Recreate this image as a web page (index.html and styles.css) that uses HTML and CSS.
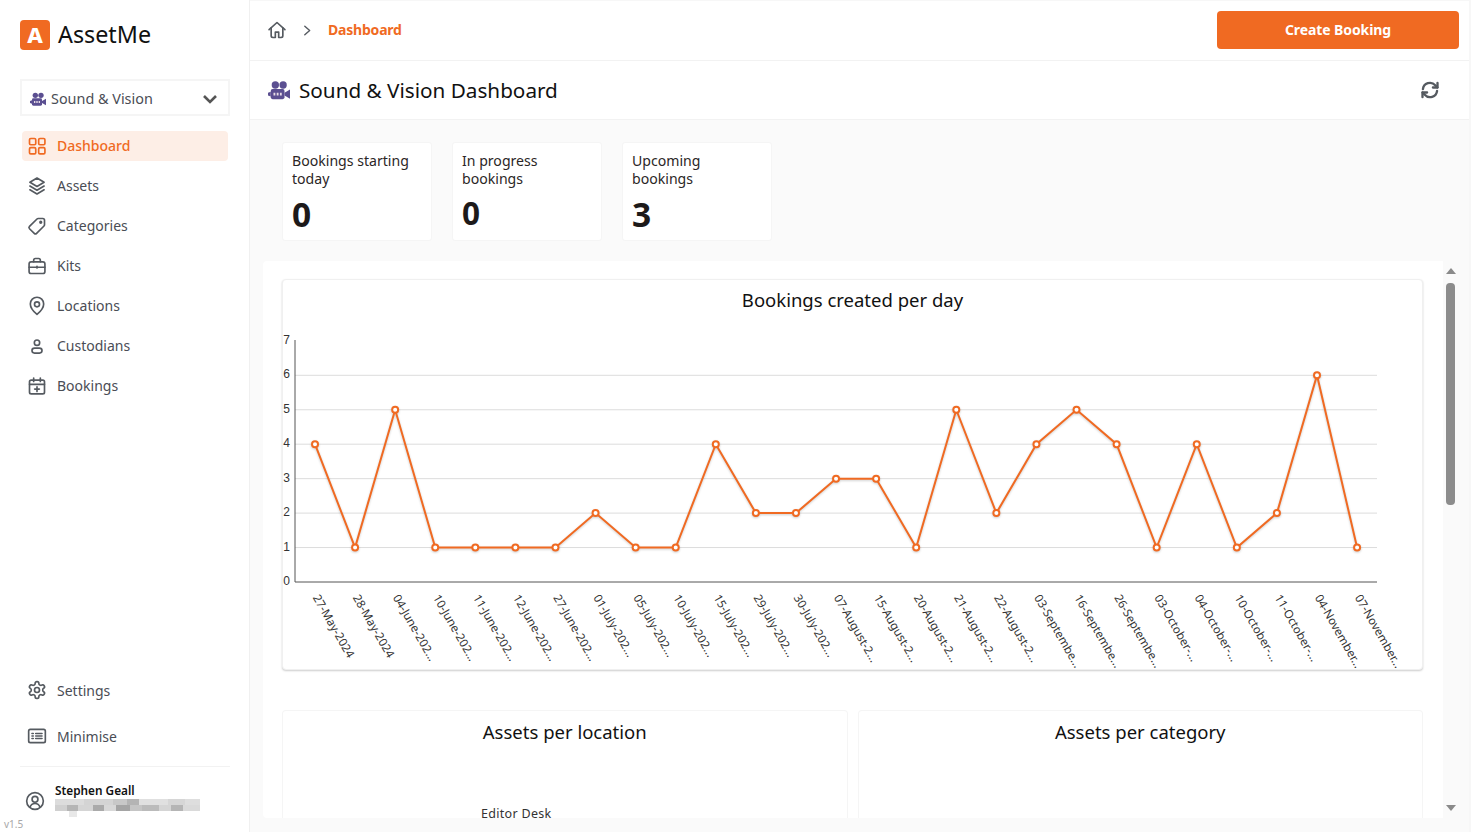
FILE: index.html
```html
<!DOCTYPE html>
<html lang="en">
<head>
    <meta charset="UTF-8">
    <meta name="viewport" content="width=device-width, initial-scale=1.0">
    <title>AssetMe - Dashboard</title>
    <link rel="stylesheet" href="styles.css">
</head>
<body>
    <aside class="sidebar">
        <div class="brand">
            <span class="brand-mark">A</span>
            <span class="brand-name">AssetMe</span>
        </div>

        <div class="team-select">
            <svg class="team-icon" viewBox="0 0 24 24"><circle cx="8" cy="6.5" r="4"/><circle cx="16.5" cy="6.5" r="4"/><rect x="3" y="11" width="15" height="11" rx="2"/><path d="M18 15l6-3.5v10L18 18zM0 15l3-1v5l-3-1z"/><rect class="team-dot" x="6" y="15" width="2" height="3"/><rect class="team-dot" x="9.5" y="15" width="2" height="3"/><rect class="team-dot" x="13" y="15" width="2" height="3"/></svg>
            <span class="team-name">Sound &amp; Vision</span>
            <svg class="team-chevron" viewBox="0 0 24 24"><path d="M4 8l8 8 8-8"/></svg>
        </div>

        <nav class="nav">
            <a class="nav-item active">
                <svg class="icon" viewBox="0 0 24 24"><rect x="3" y="3" width="7.5" height="7.5" rx="1.5"/><rect x="14" y="3" width="7.5" height="7.5" rx="1.5"/><rect x="3" y="14" width="7.5" height="7.5" rx="1.5"/><rect x="14" y="14" width="7.5" height="7.5" rx="1.5"/></svg>
                Dashboard
            </a>
            <a class="nav-item">
                <svg class="icon" viewBox="0 0 24 24"><path d="M12 2.5 3.5 7.5l8.5 5 8.5-5z"/><path d="M3.5 12l8.500 5 8.500-5"/><path d="M3.5 16.500l8.500 5 8.500-5"/></svg>
                Assets
            </a>
            <a class="nav-item">
                <svg class="icon" viewBox="0 0 24 24"><path d="M3 12.5 12 3.6a2 2 0 0 1 1.4-.6H19a2 2 0 0 1 2 2v5.6a2 2 0 0 1-.6 1.4l-8.900 8.900a2 2 0 0 1-2.800 0L3 15.300a2 2 0 0 1 0-2.800Z"/><circle cx="16.500" cy="7.500" r="1"/></svg>
                Categories
            </a>
            <a class="nav-item">
                <svg class="icon" viewBox="0 0 24 24"><rect x="2.500" y="7" width="19" height="14" rx="2.500"/><path d="M8 7V5a2 2 0 0 1 2-2h4a2 2 0 0 1 2 2v2"/><path d="M2.500 13.500h19"/><path d="M12 12.500v2"/></svg>
                Kits
            </a>
            <a class="nav-item">
                <svg class="icon" viewBox="0 0 24 24"><path d="M12 22s8-6.500 8-12.500a8 8 0 0 0-16 0C4 15.500 12 22 12 22Z"/><circle cx="12" cy="10" r="3"/></svg>
                Locations
            </a>
            <a class="nav-item">
                <svg class="icon" viewBox="0 0 24 24"><circle cx="12" cy="8" r="3.200"/><rect x="6" y="14.500" width="12" height="6" rx="3"/></svg>
                Custodians
            </a>
            <a class="nav-item">
                <svg class="icon" viewBox="0 0 24 24"><rect x="3" y="5" width="18" height="16.500" rx="2"/><path d="M3 10h18"/><path d="M8 2.500V6.500"/><path d="M16 2.500V6.500"/><path d="M12 13v5.500"/><path d="M9.200 15.700h5.600"/></svg>
                Bookings
            </a>
        </nav>

        <div class="side-bottom">
            <a class="nav-item">
                <svg class="icon" viewBox="0 0 24 24"><path d="M12.220 2h-.44a2 2 0 0 0-2 2v.18a2 2 0 0 1-1 1.730l-.43.25a2 2 0 0 1-2 0l-.15-.08a2 2 0 0 0-2.730.73l-.22.38a2 2 0 0 0 .73 2.730l.15.1a2 2 0 0 1 1 1.720v.51a2 2 0 0 1-1 1.740l-.15.09a2 2 0 0 0-.73 2.730l.22.38a2 2 0 0 0 2.730.73l.15-.08a2 2 0 0 1 2 0l.43.25a2 2 0 0 1 1 1.730V20a2 2 0 0 0 2 2h.44a2 2 0 0 0 2-2v-.18a2 2 0 0 1 1-1.730l.43-.25a2 2 0 0 1 2 0l.15.08a2 2 0 0 0 2.730-.73l.22-.39a2 2 0 0 0-.73-2.730l-.15-.08a2 2 0 0 1-1-1.740v-.5a2 2 0 0 1 1-1.740l.15-.09a2 2 0 0 0 .73-2.730l-.22-.38a2 2 0 0 0-2.730-.73l-.15.08a2 2 0 0 1-2 0l-.43-.25a2 2 0 0 1-1-1.730V4a2 2 0 0 0-2-2z"/><circle cx="12" cy="12" r="3"/></svg>
                Settings
            </a>
            <a class="nav-item minimise">
                <svg class="icon" viewBox="0 0 24 24"><rect x="2" y="4" width="20" height="16" rx="2"/><path d="M6 9h1.500M10.500 9H18M6 12h1.500M10.500 12H18M6 15h1.500M10.500 15H18"/></svg>
                Minimise
            </a>
            <div class="user">
                <svg class="icon user-icon" viewBox="0 0 24 24"><circle cx="12" cy="12" r="10"/><circle cx="12" cy="10" r="3.500"/><path d="M6 19.500c1-3 3.500-4.500 6-4.500s5 1.500 6 4.500"/></svg>
                <div class="user-info">
                    <div class="user-name">Stephen Geall</div>
                    <div class="user-email"></div>
                </div>
            </div>
        </div>
        <span class="version">v1.5</span>
    </aside>

    <main class="main">
        <header class="topbar">
            <svg class="icon crumb-home" viewBox="0 0 24 24"><path d="M2.500 11.500 12 3l9.500 8.500"/><path d="M5 9.500V19a2 2 0 0 0 2 2h3v-6.500h4V21h3a2 2 0 0 0 2-2V9.500"/></svg>
            <svg class="icon crumb-sep" viewBox="0 0 24 24"><path d="M7 4l9 8-9 8"/></svg>
            <span class="crumb-current">Dashboard</span>
            <button class="create-btn">Create Booking</button>
        </header>

        <section class="titlebar">
            <svg class="team-icon title-icon" viewBox="0 0 24 24"><circle cx="8" cy="6.500" r="4"/><circle cx="16.500" cy="6.500" r="4"/><rect x="3" y="11" width="15" height="11" rx="2"/><path d="M18 15l6-3.500v10L18 18zM0 15l3-1v5l-3-1z"/><rect class="team-dot" x="6" y="15" width="2" height="3"/><rect class="team-dot" x="9.500" y="15" width="2" height="3"/><rect class="team-dot" x="13" y="15" width="2" height="3"/></svg>
            <h1 class="page-title">Sound &amp; Vision Dashboard</h1>
            <svg class="icon refresh" viewBox="0 0 24 24"><path d="M3.500 11a8.500 8.500 0 0 1 14.800-4.700L21 9"/><path d="M21 3.500V9h-5.500"/><path d="M20.500 13a8.500 8.500 0 0 1-14.800 4.700L3 15"/><path d="M3 20.500V15h5.500"/></svg>
        </section>

        <section class="stats">
            <div class="stat-card">
                <div class="stat-label">Bookings starting today</div>
                <div class="stat-value">0</div>
            </div>
            <div class="stat-card">
                <div class="stat-label">In progress bookings</div>
                <div class="stat-value small">0</div>
            </div>
            <div class="stat-card">
                <div class="stat-label">Upcoming bookings</div>
                <div class="stat-value">3</div>
            </div>
        </section>

        <section class="panel">
            <div class="panel-content">
                <div class="chart-card">
                    <h2 class="chart-title">Bookings created per day</h2>
                    <svg id="line-chart" class="line-chart" viewBox="283 322 1139 347"></svg>
                </div>
                <div class="chart-row">
                    <div class="pie-card">
                        <h2 class="chart-title">Assets per location</h2>
                        <div class="pie-label">Editor Desk</div>
                    </div>
                    <div class="pie-card">
                        <h2 class="chart-title">Assets per category</h2>
                    </div>
                </div>
            </div>
            <div class="scroll-rail">
                <span class="arrow-up"></span>
                <span class="scroll-thumb"></span>
                <span class="arrow-down"></span>
            </div>
        </section>
    </main>

    <script src="chart.js"></script>
</body>
</html>
```

FILE: styles.css
```css
* {
    box-sizing: border-box;
}
body {
    margin: 0;
    height: 100vh;
    display: flex;
    overflow: hidden;
    font-family: "Noto Sans", Arial, sans-serif;
    color: #1d1a1a;
    background-color: #fafafa;
}
.icon {
    width: 20px;
    height: 20px;
    flex: none;
    fill: none;
    stroke: #555a60;
    stroke-width: 2;
    stroke-linecap: round;
    stroke-linejoin: round;
}

/* sidebar */
.sidebar {
    position: relative;
    width: 250px;
    flex: none;
    display: flex;
    flex-direction: column;
    padding: 20px 19px 0 20px;
    background-color: #fff;
    border-right: 1px solid #f0f0f0;
}
.brand {
    display: flex;
    align-items: center;
    gap: 8px;
    height: 30px;
}
.brand-mark {
    width: 30px;
    height: 30px;
    border-radius: 4px;
    background-color: #f06a22;
    color: #fff;
    font-size: 22px;
    font-weight: 800;
    line-height: 29px;
    text-align: center;
}
.brand-name {
    font-size: 23.300px;
    line-height: 28px;
    margin-top: -2px;
    color: #111;
}
.team-select {
    display: flex;
    align-items: center;
    height: 37px;
    margin-top: 29px;
    padding: 2px 9px 0 8px;
    border: 2px solid #f5f5f5;
}
.team-icon {
    width: 16px;
    height: 16px;
    flex: none;
    fill: #5b4f91;
}
.team-dot {
    fill: #e8dce6;
}
.team-name {
    margin-left: 5px;
    font-size: 14.400px;
    color: #4a4d55;
}
.team-chevron {
    width: 18px;
    height: 18px;
    margin-left: auto;
    fill: none;
    stroke: #555;
    stroke-width: 3.500;
}
.nav {
    margin-top: 15px;
    display: flex;
    flex-direction: column;
    gap: 10px;
}
.nav-item {
    display: flex;
    align-items: center;
    gap: 10px;
    height: 30px;
    margin: 0 2px;
    padding-left: 5px;
    border-radius: 4px;
    font-size: 14px;
    color: #4a4d55;
}
.nav .nav-item {
    padding-bottom: 1px;
}
.nav-item.active {
    background-color: #fdeee6;
    color: #f06a22;
    font-weight: 500;
}
.nav-item.active .icon {
    stroke: #f06a22;
}
.side-bottom {
    margin-top: auto;
}
.minimise {
    margin-top: 16px;
}
.user {
    display: flex;
    align-items: center;
    gap: 10px;
    height: 66px;
    margin-top: 15px;
    padding-left: 5px;
    border-top: 1px solid #f2f2f2;
}
.user-icon {
    margin-top: 2px;
}
.user-name {
    margin: -1px 0 1px;
    font-size: 11.800px;
    font-weight: 600;
    line-height: 16px;
    color: #111;
}
.user-email {
    width: 145px;
    height: 18px;
    background:
        linear-gradient(90deg, transparent 10%, #e8e8e8 10% 15%, transparent 15%) 0 12px / 100% 6px no-repeat,
        linear-gradient(90deg, #d0d0d0 0 8%, #b5b5b5 8% 16%, #d5d5d5 16% 26%, #aaa 26% 34%, #d8d8d8 34% 42%, #a5a5a5 42% 52%, #c5c5c5 52% 60%, #bbb 60% 72%, #d5d5d5 72% 80%, #b5b5b5 80% 88%, #dadada 88%) 0 6px / 100% 6px no-repeat,
        linear-gradient(90deg, #dcdcdc 0 20%, #d4d4d4 20% 40%, #c8c8c8 40% 50%, #b4b4b4 50% 58%, #e0e0e0 58% 78%, #d6d6d6 78% 90%, #dedede 90%) 0 0 / 100% 6px no-repeat;
}
.version {
    position: absolute;
    left: 4px;
    bottom: 1px;
    font-size: 10px;
    color: #a8a8a8;
}

/* main column */
.main {
    flex: 1;
    min-width: 0;
    display: flex;
    flex-direction: column;
    border-right: 2px solid #f7f7f7;
}
.topbar {
    display: flex;
    align-items: center;
    height: 61px;
    flex: none;
    padding: 0 10px 0 17px;
    background-color: #fff;
    border-top: 1px solid #f7f7f7;
    border-bottom: 1px solid #f2f2f2;
}
.crumb-home {
    margin-top: -2px;
}
.crumb-sep {
    width: 13px;
    height: 13px;
    margin: 0 0 0 14px;
    stroke-width: 2.600;
}
.crumb-current {
    margin-left: 14px;
    margin-top: -2px;
    font-size: 14px;
    font-weight: 700;
    letter-spacing: -0.2px;
    color: #f06a22;
}
.create-btn {
    width: 242px;
    height: 38px;
    margin-left: auto;
    margin-top: -2px;
    border: none;
    border-radius: 4px;
    background-color: #f06a22;
    color: #fff;
    font-family: inherit;
    font-size: 14px;
    font-weight: 700;
    letter-spacing: -0.1px;
}
.titlebar {
    display: flex;
    align-items: center;
    height: 59px;
    flex: none;
    padding: 0 29px 0 18px;
    background-color: #fff;
    border-bottom: 1px solid #f2f2f2;
}
.title-icon {
    width: 22px;
    height: 22px;
}
.page-title {
    margin: 0 0 0 9px;
    font-size: 20.700px;
    font-weight: 400;
    color: #111;
}
.refresh {
    width: 20px;
    height: 20px;
    margin-left: auto;
    stroke-width: 2.800;
}
.stats {
    display: flex;
    gap: 20px;
    flex: none;
    height: 141px;
    padding: 22px 0 0 32px;
}
.stat-card {
    width: 150px;
    height: 99px;
    padding: 9px 9px 0;
    background-color: #fff;
    border: 1px solid #f5f5f5;
    border-radius: 3px;
}
.stat-label {
    height: 41px;
    font-size: 14.100px;
    line-height: 18px;
    color: #2b2626;
}
.stat-value {
    font-size: 33.500px;
    font-weight: 700;
    line-height: 42px;
    color: #1d1a1a;
}
.stat-value.small {
    margin-top: -1px;
    font-size: 31.500px;
}

/* scrolling panel */
.panel {
    display: flex;
    height: 557px;
    margin: 0 11px 0 13px;
    flex: none;
    background-color: #fff;
    border-radius: 4px;
}
.panel-content {
    flex: 1;
    min-width: 0;
    padding: 18px 20px 0 19px;
}
.chart-card {
    height: 391px;
    background-color: #fff;
    border: 1px solid #f0f0f0;
    border-radius: 4px;
    box-shadow: 0 1px 2px rgba(0, 0, 0, 0.2);
}
.chart-title {
    margin: 0;
    height: 42px;
    font-size: 18.500px;
    font-weight: 400;
    line-height: 41px;
    text-align: center;
    color: #111;
}
.chart-card .chart-title {
    line-height: 39px;
}
.line-chart {
    display: block;
    width: 1139px;
    height: 347px;
    overflow: visible;
}
.grid-line {
    stroke: #dcdcdc;
    stroke-width: 1;
}
.axis-line {
    stroke: #555;
    stroke-width: 1;
}
.tick {
    font-family: "Liberation Sans", Arial, sans-serif;
    font-size: 12px;
    fill: #333;
}
.tick-x {
    font-family: "Noto Sans", Arial, sans-serif;
    font-size: 11.700px;
}
.series {
    filter: drop-shadow(0 1px 1px rgba(0, 0, 0, 0.2));
}
.series-line {
    fill: none;
    stroke: #f06a22;
    stroke-width: 2;
}
.series-point {
    fill: #fff;
    stroke: #f06a22;
    stroke-width: 2;
}
.chart-row {
    display: flex;
    gap: 10px;
    margin-top: 40px;
}
.pie-card {
    flex: 1;
    height: 108px;
    border: 1px solid #f5f5f5;
    border-bottom: none;
    border-radius: 4px 4px 0 0;
}
.pie-label {
    margin: 52px 0 0 198px;
    font-size: 12.500px;
    letter-spacing: 0.3px;
    color: #333;
}
.scroll-rail {
    width: 15px;
    flex: none;
    display: flex;
    flex-direction: column;
    align-items: center;
    padding: 7px 0;
    background-color: #fafafa;
}
.arrow-up, .arrow-down {
    width: 0;
    height: 0;
    border-left: 5px solid transparent;
    border-right: 5px solid transparent;
}
.arrow-up {
    border-bottom: 6px solid #8a8a8a;
}
.arrow-down {
    margin-top: auto;
    border-top: 6px solid #8a8a8a;
}
.scroll-thumb {
    width: 9px;
    height: 222px;
    margin-top: 9px;
    border-radius: 4px;
    background-color: #8c8c8c;
}
```

FILE: chart.js
```js
const labels = [
    '27-May-2024', '28-May-2024', '04-June-202...', '10-June-202...', '11-June-202...',
    '12-June-202...', '27-June-202...', '01-July-202...', '05-July-202...', '10-July-202...',
    '15-July-202...', '29-July-202...', '30-July-202...', '07-August-2...', '15-August-2...',
    '20-August-2...', '21-August-2...', '22-August-2...', '03-Septembe...', '16-Septembe...',
    '26-Septembe...', '03-October-...', '04-October-...', '10-October-...', '11-October-...',
    '04-November...', '07-November...'
];
const values = [4, 1, 5, 1, 1, 1, 1, 2, 1, 1, 4, 2, 2, 3, 3, 1, 5, 2, 4, 5, 4, 1, 4, 1, 2, 6, 1];

const yFor = (v) => 582 - v * 34.45;
const xFor = (i) => 315 + i * 40.08;

let html = '';

// gridlines and y axis ticks
for (let v = 0; v <= 7; v++) {
    if (v > 0 && v < 7) {
        html += `<line class="grid-line" x1="295" x2="1377" y1="${yFor(v)}" y2="${yFor(v)}"/>`;
    }
    html += `<text class="tick" x="290" y="${yFor(v) + 3}" text-anchor="end">${v}</text>`;
}
html += '<line class="axis-line" x1="295" x2="295" y1="340" y2="582"/>';
html += '<line class="axis-line" x1="295" x2="1377" y1="582" y2="582"/>';

// x axis labels
labels.forEach((label, i) => {
    const x = xFor(i);
    html += `<text class="tick tick-x" x="${x}" y="599" transform="rotate(60 ${x} 596)">${label}</text>`;
});

// series
const points = values.map((v, i) => `${xFor(i)},${yFor(v)}`).join(' ');
html += `<g class="series"><polyline class="series-line" points="${points}"/>`;
values.forEach((v, i) => {
    html += `<circle class="series-point" cx="${xFor(i)}" cy="${yFor(v)}" r="3"/>`;
});
html += '</g>';

document.getElementById('line-chart').innerHTML = html;
```
